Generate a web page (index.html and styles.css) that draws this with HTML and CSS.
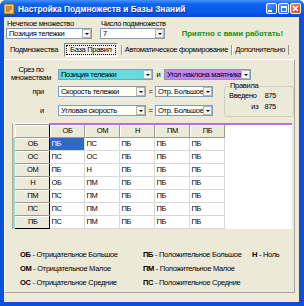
FILE: index.html
```html
<!DOCTYPE html>
<html lang="ru">
<head>
  <meta charset="UTF-8">
  <title>Настройка Подмножеств и Базы Знаний</title>
  <link rel="stylesheet" href="styles.css">
</head>
<body>
  <div class="window">
    <div class="titlebar">
      <svg class="app-icon" width="12" height="12" viewBox="0 0 12 12">
        <rect x="1" y="1" width="10" height="10" fill="#f0d060" stroke="#806010"/>
        <path d="M3 4h6M3 6h6M3 8h4" stroke="#c03020" stroke-width="1"/>
      </svg>
      <span class="title">Настройка Подмножеств и Базы Знаний</span>
      <div class="controls">
        <span class="ctl"><i class="min"></i></span>
        <span class="ctl"><i class="max"></i></span>
        <span class="ctl close">
          <svg width="9" height="9" viewBox="0 0 9 9"><path d="M2 2l5 5M7 2l-5 5" stroke="#fff" stroke-width="1.6"/></svg>
        </span>
      </div>
    </div>

    <div class="client">
      <div class="top-row">
        <div class="field">
          <label>Нечеткое множество</label>
          <div class="combo w-set"><span>Позиция тележки</span><i class="drop"></i></div>
        </div>
        <div class="field">
          <label>Число подмножеств</label>
          <div class="combo w-num"><span>7</span><i class="drop"></i></div>
        </div>
        <div class="greeting">Приятно с вами работать!</div>
      </div>

      <div class="tabs">
        <span class="tab">Подмножества</span>
        <span class="tab active"><span class="focus">База Правил</span></span>
        <span class="tab sep">Автоматическое формирование</span>
        <span class="tab sep">Дополнительно</span>
        <span class="tab sep last"></span>
      </div>

      <div class="panel">
        <div class="slice-row">
          <div class="slice-label">Срез по<br>множествам</div>
          <div class="combo w-slice cyan"><span>Позиция тележки</span><i class="drop"></i></div>
          <span class="conj">и</span>
          <div class="combo w-slice2 violet"><span>Угол наклона маятника</span><i class="drop"></i></div>
        </div>

        <div class="split">
          <div class="conds">
            <div class="cond-row">
              <span class="cond-label">при</span>
              <div class="combo w-var pale"><span>Скорость тележки</span><i class="drop"></i></div>
              <span class="eq">=</span>
              <div class="combo w-val"><span>Отр. Большое</span><i class="drop"></i></div>
            </div>
            <div class="cond-row">
              <span class="cond-label">и</span>
              <div class="combo w-var pale"><span>Угловая скорость</span><i class="drop"></i></div>
              <span class="eq">=</span>
              <div class="combo w-val"><span>Отр. Большое</span><i class="drop"></i></div>
            </div>
          </div>
          <fieldset class="rules">
            <legend>Правила</legend>
            <div class="rules-line"><span>Введено</span><b>875</b></div>
            <div class="rules-line"><span>из</span><b>875</b></div>
          </fieldset>
        </div>

        <div class="grid">
          <table class="rule-table">
            <tr class="head">
              <th class="fixed corner"></th>
              <th>ОБ</th><th>ОМ</th><th>Н</th><th>ПМ</th><th>ПБ</th><th class="fill"></th>
            </tr>
            <tr><th class="fixed">ОБ</th><td class="sel">ПБ</td><td>ПС</td><td>ПБ</td><td>ПБ</td><td>ПБ</td><td class="fill"></td></tr>
            <tr><th class="fixed">ОС</th><td>ПС</td><td>ОС</td><td>ПБ</td><td>ПБ</td><td>ПБ</td><td class="fill"></td></tr>
            <tr><th class="fixed">ОМ</th><td>ПБ</td><td>Н</td><td>ПБ</td><td>ПБ</td><td>ПБ</td><td class="fill"></td></tr>
            <tr><th class="fixed">Н</th><td>ОБ</td><td>ПМ</td><td>ПБ</td><td>ПБ</td><td>ПБ</td><td class="fill"></td></tr>
            <tr><th class="fixed">ПМ</th><td>ПС</td><td>ПМ</td><td>ПБ</td><td>ПБ</td><td>ПБ</td><td class="fill"></td></tr>
            <tr><th class="fixed">ПС</th><td>ПС</td><td>ПМ</td><td>ПБ</td><td>ПБ</td><td>ПБ</td><td class="fill"></td></tr>
            <tr class="last"><th class="fixed">ПБ</th><td>ПС</td><td>ПМ</td><td>ПБ</td><td>ПБ</td><td>ПБ</td><td class="fill"></td></tr>
          </table>
        </div>

        <div class="legend">
          <div class="legend-col first">
            <div><b>ОБ</b> - Отрицательное Большое</div>
            <div><b>ОМ</b> - Отрицательное Малое</div>
            <div><b>ОС</b> - Отрицательное Средние</div>
          </div>
          <div class="legend-col mid">
            <div><b>ПБ</b> - Положительное Большое</div>
            <div><b>ПМ</b> - Положительное Малое</div>
            <div><b>ПС</b> - Положительное Средние</div>
          </div>
          <div class="legend-col end">
            <div><b>Н</b> - Ноль</div>
          </div>
        </div>
      </div>
    </div>
  </div>
</body>
</html>
```

FILE: styles.css
```css
* {
  box-sizing: border-box;
}

body {
  margin: 0;
  background: #fff;
  font-family: "Liberation Sans", Arial, sans-serif;
  font-size: 7.5px;
  letter-spacing: -0.3px;
  color: #000;
}

.window {
  width: 304px;
  height: 306px;
  display: flex;
  flex-direction: column;
  background: #0c4fd8;
  border-radius: 6px 6px 0 0;
  overflow: hidden;
  white-space: nowrap;
}

/* title bar */
.titlebar {
  height: 17px;
  display: flex;
  align-items: center;
  padding: 0 3px;
  background: linear-gradient(#4592fa, #0d63f0 25%, #085aeb 70%, #0048d6);
  color: #fff;
}

.app-icon {
  margin-right: 3px;
}

.title {
  font-size: 8.4px;
  letter-spacing: 0;
  font-weight: bold;
  text-shadow: 1px 1px 0 #0b2e9c;
}

.controls {
  margin-left: auto;
  display: flex;
  gap: 1px;
}

.ctl {
  width: 11px;
  height: 11px;
  border: 1px solid #fff;
  border-radius: 2px;
  background: linear-gradient(135deg, #5a96ff, #1a5ce8);
  display: flex;
  align-items: center;
  justify-content: center;
}

.ctl .min {
  width: 4px;
  height: 2px;
  background: #fff;
  margin: 5px 4px 0 0;
}

.ctl .max {
  width: 6px;
  height: 6px;
  border: 1px solid #fff;
  border-top-width: 2px;
}

.ctl.close {
  background: linear-gradient(135deg, #f08a6a, #d0401c);
}

/* client area */
.client {
  flex: 1;
  margin: 0 5px 4px 4px;
  background: #ece9d8;
  display: flex;
  flex-direction: column;
}

.top-row {
  display: flex;
  align-items: flex-end;
  padding: 2px 0 0 2px;
  height: 22px;
}

.field {
  display: flex;
  flex-direction: column;
  margin-right: 8px;
}

.field label {
  padding-left: 1px;
  line-height: 9px;
}

.combo {
  height: 11px;
  display: flex;
  align-items: center;
  background: #fff;
  border: 1px solid #7f9db9;
  overflow: hidden;
}

.combo span {
  flex: 1;
  padding-left: 2px;
  overflow: hidden;
  line-height: 9px;
}

.drop {
  width: 9px;
  height: 9px;
  flex: none;
  background: #f4f3ee;
  border: 1px solid #b9b6a8;
  position: relative;
}

.drop::after {
  content: "";
  position: absolute;
  left: 2px;
  top: 3px;
  border-left: 2px solid transparent;
  border-right: 2px solid transparent;
  border-top: 2px solid #000;
}

.w-set { width: 86px; }
.w-num { width: 65px; }
.w-slice { width: 95px; }
.w-slice2 { width: 87px; }
.w-var { width: 88px; }
.w-val { width: 58px; }

.cyan { background: #62dcdc; }
.violet { background: #c486ee; }
.pale { background: #fffff4; }

.greeting {
  margin-left: auto;
  margin-right: 16px;
  align-self: center;
  margin-top: 8px;
  color: #17901a;
  font-size: 7.8px;
  letter-spacing: 0;
  font-weight: bold;
}

/* tabs */
.tabs {
  display: flex;
  align-items: center;
  height: 14px;
  margin-top: 4px;
  padding-left: 3px;
}

.tab {
  padding: 0 3px;
  line-height: 10px;
}

.tab.active {
  margin: 0 3px;
  padding: 1px;
  border: 1px solid;
  border-color: #808080 #fff #fff #808080;
  background: #f4f3ee;
}

.tab.active .focus {
  display: block;
  padding: 0 3px;
  border: 1px dotted #000;
  line-height: 8px;
}

.tab.sep {
  border-left: 1px solid #9c9a8c;
  box-shadow: inset 1px 0 0 #fff;
}

.tab.last {
  height: 10px;
  padding: 0;
}

/* panel */
.panel {
  flex: 1;
  margin: 2px 4px 9px 0;
  border: 1px solid;
  border-color: #fff #aca899 #aca899 #fff;
  display: flex;
  flex-direction: column;
}

.slice-row {
  display: flex;
  align-items: center;
  margin: 6px 0 0 6px;
  height: 16px;
}

.slice-label {
  width: 40px;
  text-align: center;
  line-height: 8px;
  margin-right: 7px;
}

.conj {
  width: 11px;
  text-align: center;
}

.split {
  display: flex;
  align-items: flex-start;
}

.conds {
  display: flex;
  flex-direction: column;
  gap: 8px;
  padding-top: 4px;
}

.cond-row {
  display: flex;
  align-items: center;
}

.cond-label {
  width: 39px;
  text-align: right;
  margin-right: 14px;
}

.eq {
  width: 9px;
  text-align: center;
}

.rules {
  margin: 0 0 0 11px;
  width: 73px;
  height: 35px;
  padding: 0 4px;
  border: 1px solid #d0d0bf;
  border-radius: 3px;
}

.rules legend {
  padding: 0 1px;
  line-height: 8px;
}

.rules-line {
  display: flex;
  justify-content: flex-end;
  line-height: 11px;
}

.rules-line span {
  margin-right: auto;
}

.rules-line:last-child span {
  margin-right: 6px;
}

.rules-line b {
  font-weight: normal;
  margin-right: 13px;
}

/* grid */
.grid {
  margin: 6px 2px 0 7px;
  background: #fff;
  border-left: 1px solid #aca899;
}

.rule-table {
  width: 100%;
  border-collapse: collapse;
  table-layout: fixed;
}

.rule-table th,
.rule-table td {
  width: 35px;
  height: 13px;
  padding: 0 0 0 2px;
  font-weight: normal;
  line-height: 11px;
}

.rule-table td {
  text-align: left;
  border-right: 1px solid #d8d8d8;
  border-bottom: 1px solid #d8d8d8;
}

.rule-table .head th {
  text-align: center;
  background: #ece9d8;
  border-top: 2px solid #b26fe6;
  border-right: 1px solid #9c9a8c;
  border-bottom: 1px solid #9c9a8c;
  box-shadow: inset 1px 1px 0 #fff;
}

.rule-table th.fixed {
  text-align: center;
  background: #ece9d8;
  border-left: 2px solid #8edcd6;
  border-right: 1px solid #000;
  border-bottom: 1px solid #9c9a8c;
  box-shadow: inset 1px 1px 0 #fff;
}

.rule-table .head th.corner {
  border-top: 1px solid #9c9a8c;
  border-left: 2px solid #ece9d8;
  border-right: 1px solid #000;
}

.rule-table .head th.fill,
.rule-table td.fill {
  width: auto;
  background: #fff;
  border-right: none;
  border-bottom: none;
  box-shadow: none;
}

.rule-table tr.last th.fixed {
  border-bottom: 1px solid #000;
}

.rule-table td.sel {
  background: #316ac5;
  color: #fff;
}

/* legend */
.legend {
  display: flex;
  margin: 22px 0 0 15px;
}

.legend-col {
  display: flex;
  flex-direction: column;
  gap: 6px;
  line-height: 8px;
}

.legend-col.first {
  width: 123px;
}

.legend-col.mid {
  width: 109px;
}
```
